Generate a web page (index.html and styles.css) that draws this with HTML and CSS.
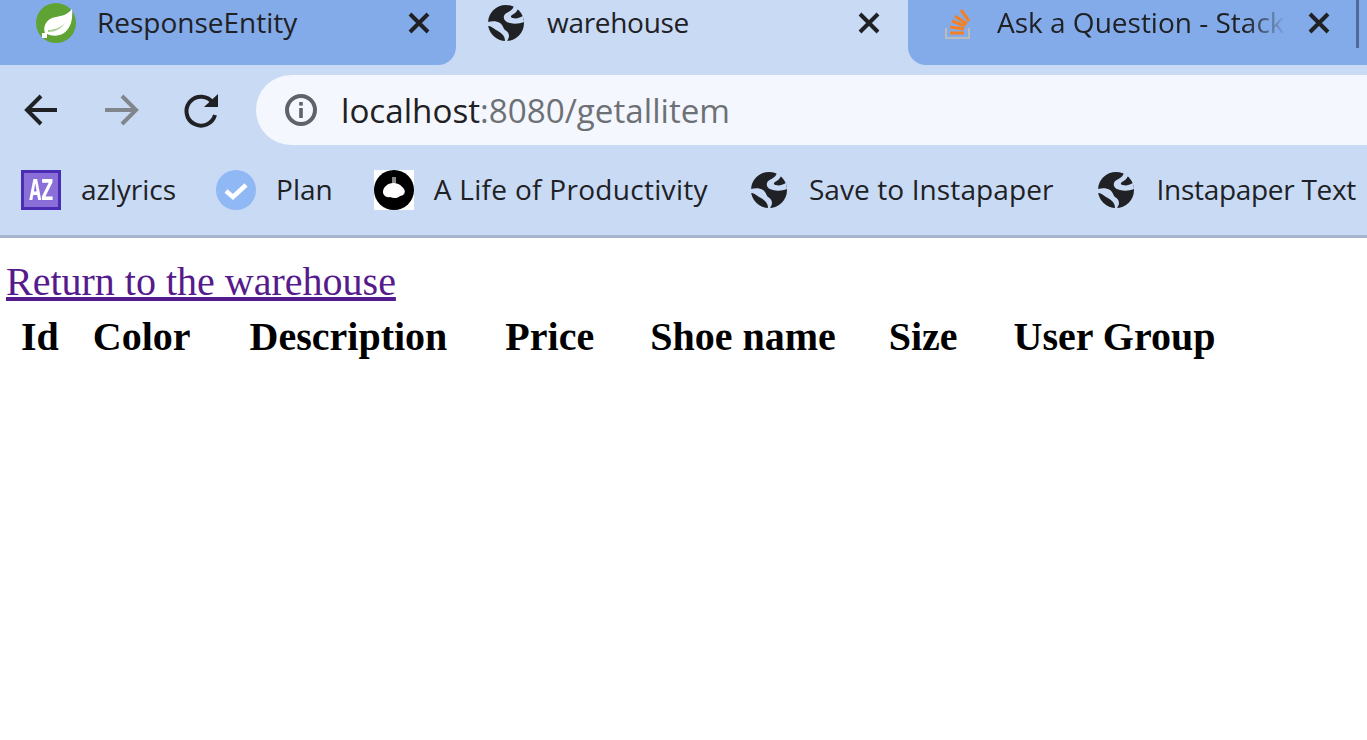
FILE: index.html
```html
<!DOCTYPE html>
<html lang="en">
<head>
<meta charset="utf-8">
<title>warehouse</title>
<link rel="stylesheet" href="styles.css">
</head>
<body>
<svg class="defs" width="0" height="0" aria-hidden="true">
  <symbol id="globe" viewBox="0 0 36 36">
    <circle cx="18" cy="18" r="18" fill="#202124"/>
    <path fill="#c9daf5" d="M26 1l4 3c-1 3-4 5-6 6-2 1-1 3 1 3 3 1 6 0 10-2l1 6c-5 2-10 2-14 1-5-1-7-4-6-7 1-3 3-3 6-5 2-1 3-3 4-5z"/>
    <path fill="#c9daf5" d="M0 17c4-1 9-1 12 1 3 2 3 5 5 7 2 1 4 3 4 6 0 2-1 3-2 5h-2c0-3-1-5-3-7-2-2-4-3-6-4-3-2-5-4-8-4z"/>
  </symbol>
</svg>
<header class="chrome">
  <div class="tabs">
    <div class="tab tab-first">
      <svg class="fav" viewBox="0 0 40 40"><circle cx="20" cy="20" r="20" fill="#5fa334"/><path fill="#fff" d="M36 6c1 10-1 19-8 24-6 4-14 3-19 0-2-5 0-12 7-15 7-2 15-2 20-9z"/><path fill="#a9cc92" d="M12 27c6 0 12-2 17-7-4 6-10 9-17 9z"/><rect x="6" y="30" width="5" height="5" fill="#fff"/></svg>
      <span class="tab-title">ResponseEntity</span>
      <svg class="close" viewBox="0 0 22 22"><path d="M2 2l18 18M20 2L2 20"/></svg>
    </div>
    <div class="tab tab-active">
      <svg class="fav-globe"><use href="#globe"/></svg>
      <span class="tab-title tab-tight">warehouse</span>
      <svg class="close" viewBox="0 0 22 22"><path d="M2 2l18 18M20 2L2 20"/></svg>
    </div>
    <div class="tab tab-last">
      <svg class="fav-so" viewBox="0 0 28 32"><path fill="none" stroke="#bbb" stroke-width="2" d="M2 21v10h23V21"/><path fill="none" stroke="#f48024" stroke-width="3" d="M6 26h14M6 20l14 2M8 14l13 5M11 9l12 8M17 3l8 11"/></svg>
      <span class="tab-title tab-fade">Ask a Question - Stack</span>
      <svg class="close" viewBox="0 0 22 22"><path d="M2 2l18 18M20 2L2 20"/></svg>
      <span class="tab-sep"></span>
    </div>
  </div>
  <div class="toolbar">
    <svg class="nav" viewBox="0 0 36 36"><path d="M34 18H4M18 4L4 18l14 14"/></svg>
    <svg class="nav nav-off" viewBox="0 0 36 36"><path d="M2 18h31M19 4l14 14-14 14"/></svg>
    <svg class="nav" viewBox="0 0 36 36"><path d="M30 11a14.500 14.500 0 1 0 2 12"/><path class="solid" d="M21 15h14V2z"/></svg>
    <div class="omnibox">
      <svg class="info" viewBox="0 0 32 32"><circle cx="16" cy="16" r="14"/><rect class="solid" x="14.200" y="14" width="3.600" height="10"/><rect class="solid" x="14.200" y="8" width="3.600" height="3.600"/></svg>
      <span class="url">localhost<span class="url-dim">:8080/getallitem</span></span>
    </div>
  </div>
  <nav class="bookmarks">
    <div class="bm bm-az"><span class="az"><span class="az-text">AZ</span></span><span class="bm-label">azlyrics</span></div>
    <div class="bm bm-plan"><svg class="bm-icon" viewBox="0 0 40 40"><circle cx="20" cy="20" r="20" fill="#8fb8f5"/><path d="M10 21l7 6 13-12" fill="none" stroke="#fff" stroke-width="4.500"/></svg><span class="bm-label">Plan</span></div>
    <div class="bm bm-life"><svg class="bm-icon" viewBox="0 0 40 40"><rect width="40" height="40" fill="#fff"/><circle cx="20" cy="20" r="20" fill="#000"/><path fill="#888" d="M18 7h4v6h-4z"/><path fill="#fff" d="M19 13c5 0 8 2 11 6 2 3 0 7-4 7-3 3-7 2-10 1-4 1-7-2-7-5 0-5 5-9 10-9z"/></svg><span class="bm-label life-label">A Life of Productivity</span></div>
    <div class="bm bm-save"><svg class="bm-globe"><use href="#globe"/></svg><span class="bm-label save-label">Save to Instapaper</span></div>
    <div class="bm bm-text"><svg class="bm-globe"><use href="#globe"/></svg><span class="bm-label text-label">Instapaper Text</span></div>
  </nav>
</header>
<main class="page">
  <a class="back" href="#">Return to the warehouse</a>
  <table class="items">
    <thead>
      <tr>
        <th class="c-id">Id</th>
        <th class="c-color">Color</th>
        <th class="c-desc">Description</th>
        <th class="c-price">Price</th>
        <th class="c-name">Shoe name</th>
        <th class="c-size">Size</th>
        <th class="c-group">User Group</th>
      </tr>
    </thead>
  </table>
</main>
</body>
</html>
```
FILE: styles.css
```css
html, body { margin: 0; padding: 0; height: 100%; background: #fff; overflow: hidden; }
.defs { position: absolute; }
.chrome { background: #c9daf5; border-bottom: 3px solid #a6b3cd; height: 235px; font-family: "Open Sans", "Noto Sans", sans-serif; color: #202124; font-size: 28px; }

.tabs { display: grid; grid-template-columns: 456px 452px 1fr; height: 65px; }
.tab { display: flex; align-items: center; height: 65px; box-sizing: border-box; padding-bottom: 19px; position: relative; min-width: 0; }
.tab-first { background: #83abe9; border-bottom-right-radius: 18px; padding-left: 36px; }
.tab-active { padding-left: 32px; }
.tab-last { background: #83abe9; border-bottom-left-radius: 18px; padding-left: 36px; overflow: hidden; }
.fav { width: 40px; height: 40px; margin-right: 21px; flex: none; }
.fav-globe { width: 36px; height: 36px; margin-right: 23px; flex: none; }
.fav-so { width: 28px; height: 32px; margin-right: 25px; flex: none; }
.tab-title { white-space: nowrap; width: 311px; flex: none; margin-bottom: 2px; }
.tab-tight { letter-spacing: -0.3px; }
.tab-fade { width: 311px; -webkit-mask-image: linear-gradient(to right, #000 80%, transparent 93%); mask-image: linear-gradient(to right, #000 80%, transparent 93%); }
.close { width: 22px; height: 22px; flex: none; fill: none; stroke: #202124; stroke-width: 4; }
.tab-sep { position: absolute; left: 448px; top: 0; width: 3px; height: 48px; background: #4f6a96; }

.toolbar { display: flex; align-items: center; height: 90px; padding-left: 23px; }
.nav { width: 36px; height: 36px; margin-right: 44px; fill: none; stroke: #202124; stroke-width: 4; flex: none; }
.nav-off { stroke: #80868b; }
.nav .solid { fill: #202124; stroke: none; }
.omnibox { flex: 1; height: 70px; margin-left: -7px; background: #f4f7fd; border-radius: 35px 0 0 35px; display: flex; align-items: center; padding-left: 29px; font-size: 33.200px; }
.info { width: 32px; height: 32px; margin-right: 24px; fill: none; stroke: #5f6368; stroke-width: 4; flex: none; }
.info .solid { fill: #5f6368; stroke: none; }
.url { white-space: nowrap; }
.url-dim { color: #6d7175; }

.bookmarks { display: flex; align-items: center; height: 70px; padding-bottom: 10px; white-space: nowrap; }
.bm { display: flex; align-items: center; gap: 20px; flex: none; }
.bm-az { margin-left: 21px; }
.bm-plan { margin-left: 40px; }
.bm-life { margin-left: 41px; }
.bm-save { margin-left: 43px; gap: 22px; }
.bm-text { margin-left: 44px; gap: 23px; }
.bm-label { margin-bottom: 2px; }
.life-label { letter-spacing: 0.3px; }
.save-label { letter-spacing: 0.1px; }
.text-label { letter-spacing: -0.3px; }
.bm-icon { width: 40px; height: 40px; flex: none; }
.bm-globe { width: 36px; height: 36px; flex: none; }
.az { display: flex; align-items: center; justify-content: center; width: 40px; height: 40px; box-sizing: border-box; border: 3px solid #4b2db5; background: #8b6fd8; flex: none; overflow: hidden; }
.az-text { color: #fff; font: bold 26px/34px "DejaVu Sans Mono", monospace; letter-spacing: -1px; transform: scale(0.8, 1.1); }

.page { padding-left: 6px; font-family: "Liberation Serif", serif; font-size: 40px; color: #000; }
.back { display: block; width: max-content; color: #551a8b; line-height: 46px; margin-top: 21px; }
.items { border-collapse: collapse; margin-top: 9px; }
.items th { padding: 0; font-size: 40px; font-weight: bold; line-height: 46px; text-align: left; white-space: nowrap; }
.c-id { padding-left: 15px !important; padding-right: 34px !important; }
.c-color { padding-right: 59px !important; }
.c-desc { padding-right: 58px !important; }
.c-price { padding-right: 56px !important; }
.c-name { padding-right: 53px !important; }
.c-size { padding-right: 56px !important; }
```
